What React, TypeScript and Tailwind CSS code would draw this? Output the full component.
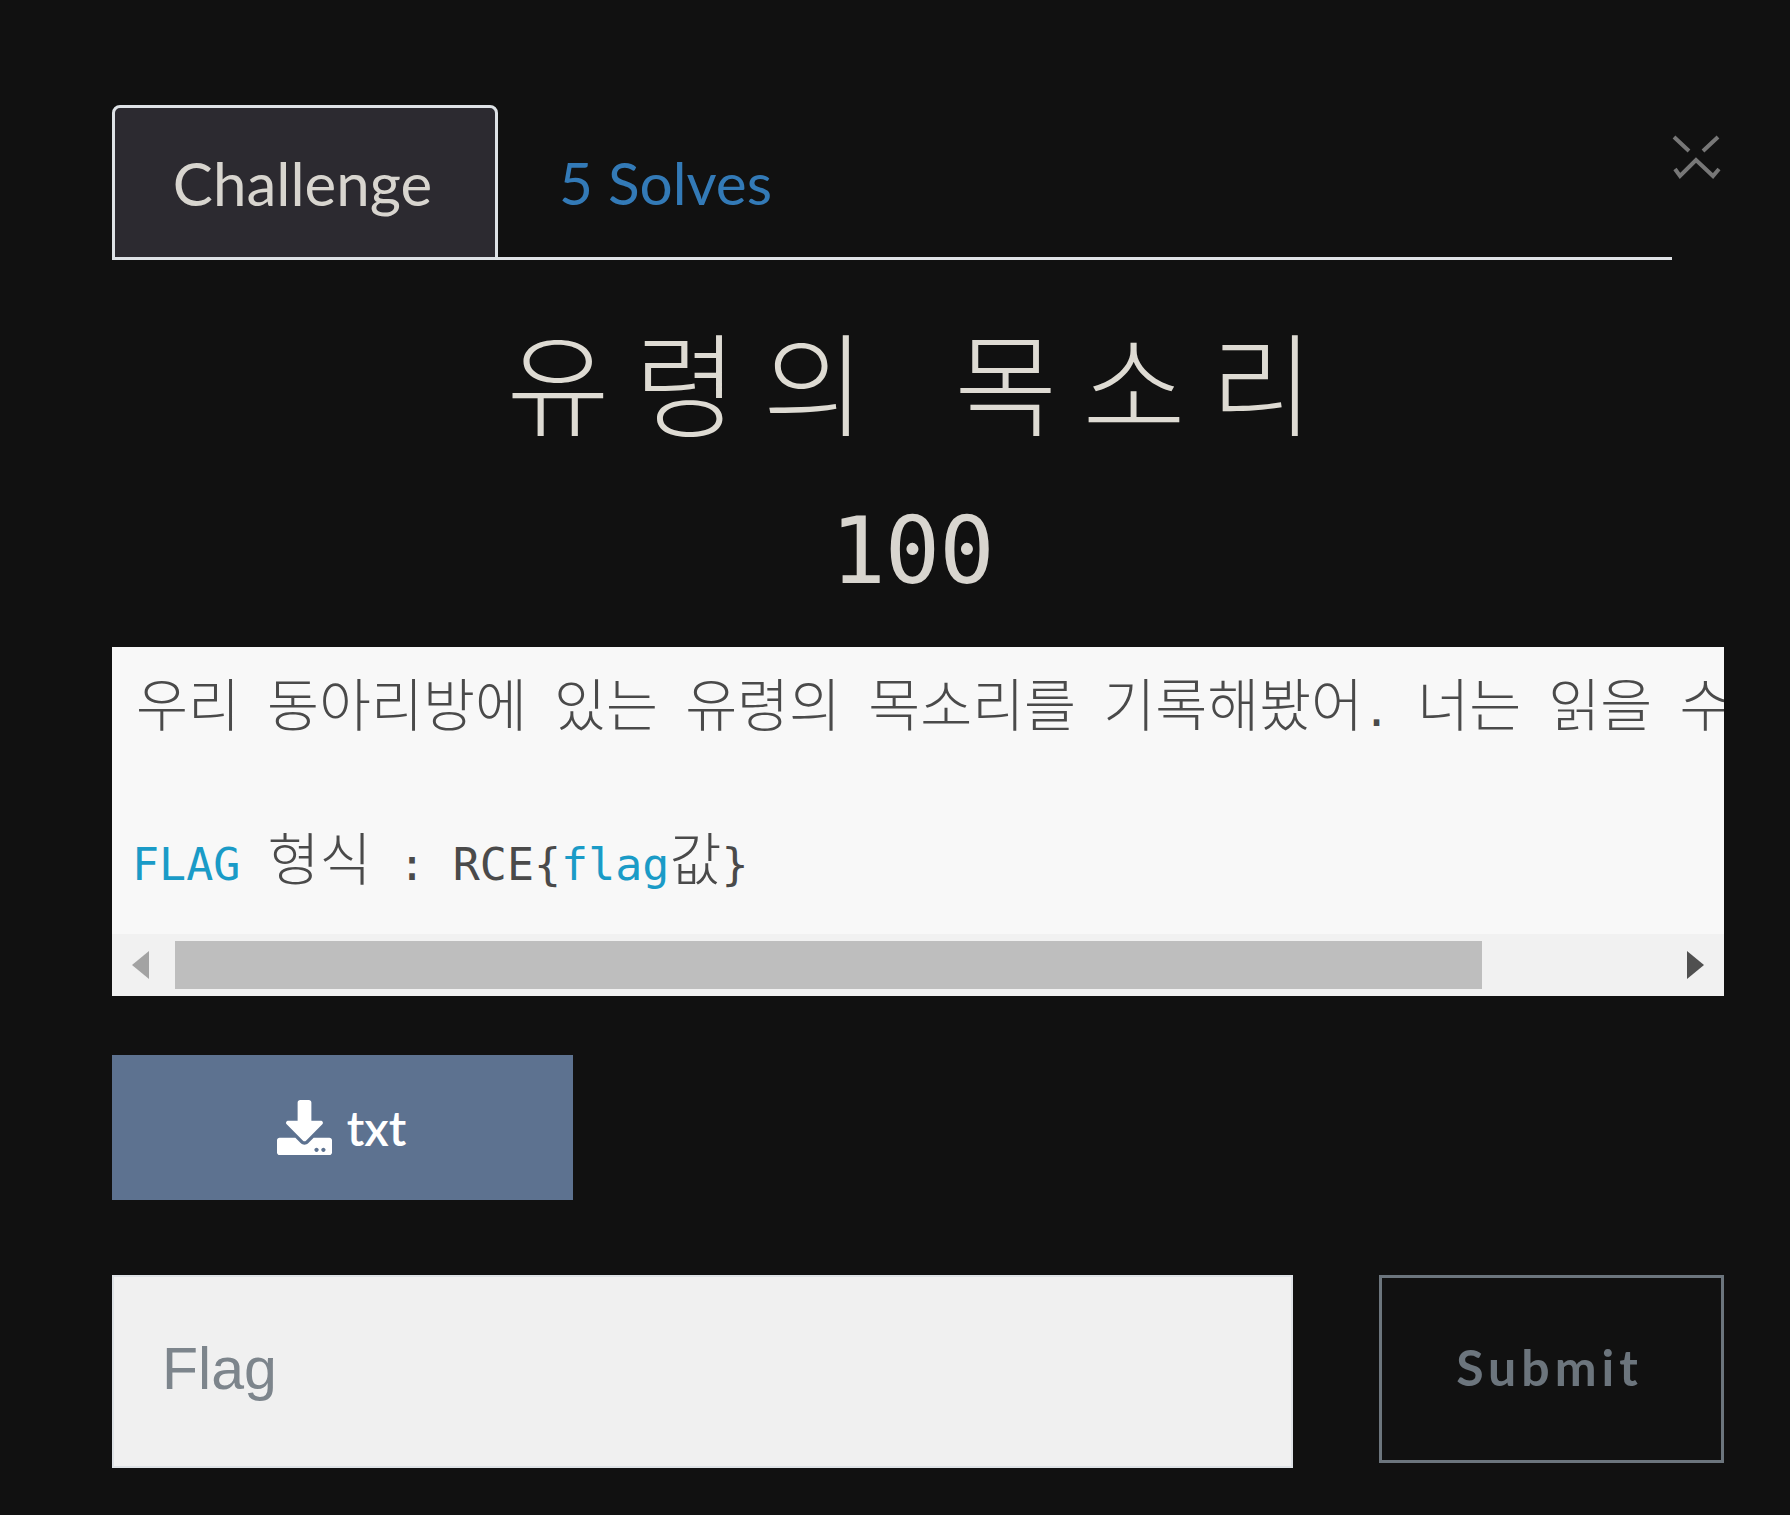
import { FaDownload } from "react-icons/fa";

const H = ({ children }: { children: string }) => (
  <span className="font-['Noto_Sans_CJK_KR',sans-serif] text-[56.5px] font-light">{children}</span>
);

export default function App() {
  return (
    <div className="min-h-[1515px] w-[1790px] bg-[#111111] pl-[112px] pt-[105px] font-['Lato',sans-serif]">
      <div className="w-[1612px]">
        <div className="flex items-start">
          <div className="flex h-[155px] w-[1560px] items-stretch border-b-[3px] border-[#dfe2e6]">
            <div className="-mb-[3px] flex w-[386px] items-center justify-center rounded-t-[8px] border-[3px] border-[#dee2e6] bg-[#2c2a30] pr-[5px] text-[60px] text-[#d8d5cf]">
              Challenge
            </div>
            <div className="flex items-center pl-[61px] pt-[4px] text-[58.5px] text-[#337ab7]">5 Solves</div>
          </div>
          <svg className="mt-[30px]" width="50" height="46" viewBox="0 0 50 46" fill="none" stroke="#777777" strokeWidth="4">
            <path d="M2 2L17 16M46 2L31 16M3 34L8 41L24 25L41 41L47 34" />
          </svg>
        </div>

        <h1 className="mt-[54px] pl-[9px] text-center font-['Noto_Sans_CJK_KR',sans-serif] text-[112px] font-light leading-[130px] tracking-[25px] text-[#dedbd3] [word-spacing:14px]">
          유령의 목소리
        </h1>
        <h2 className="mt-[58px] pr-[12px] text-center font-['DejaVu_Sans_Mono',monospace] text-[92px] font-normal leading-[100px] tracking-[-1px] text-[#d8d5cf]">
          100
        </h2>

        <div className="mt-[45px] h-[349px] overflow-hidden bg-[#f8f8f8]">
          <pre className="h-[287px] overflow-hidden whitespace-pre pl-[24px] pt-[18px] font-['DejaVu_Sans_Mono',monospace] text-[45px] leading-[72px] text-[#4a4a4a]">
            <H>우리</H> <H>동아리방에</H> <H>있는</H> <H>유령의</H> <H>목소리를</H> <H>기록해봤어</H>. <H>너는</H> <H>읽을</H> <H>수</H>
            {"\n\n"}
            <span className="-ml-[4px] text-[#1a9bc7]">FLAG</span> <H>형식</H> : RCE{"{"}
            <span className="text-[#1a9bc7]">flag</span>
            <H>값</H>
            {"}"}
          </pre>
          <div className="flex h-[62px] items-center bg-[#f1f1f1]">
            <svg className="ml-[20px]" width="18" height="28" viewBox="0 0 18 28" fill="#a3a3a3">
              <path d="M17 0V28L0 14Z" />
            </svg>
            <div className="ml-[25px] h-[48px] w-[1307px] bg-[#bebebe]" />
            <svg className="ml-[204px]" width="18" height="28" viewBox="0 0 18 28" fill="#505050">
              <path d="M1 0V28L18 14Z" />
            </svg>
          </div>
        </div>

        <button className="mt-[59px] flex h-[145px] w-[461px] items-center justify-center gap-[15px] bg-[#5d7290] pr-[2px] text-[48px] font-semibold text-white">
          <FaDownload size={55} />
          <span>txt</span>
        </button>

        <div className="mt-[75px] flex items-start justify-between">
          <input
            placeholder="Flag"
            className="h-[193px] w-[1181px] border-2 border-[#dee2e6] bg-[#f0f0f0] pb-[6px] pl-[48px] font-['Liberation_Sans',sans-serif] text-[59px] placeholder:text-[#7d858c]"
          />
          <button className="flex h-[188px] w-[345px] items-center justify-center border-[3px] border-[#6c757d] pb-[3px] pr-[4px] text-[50px] font-bold tracking-[5px] text-[#6c757d]">
            Submit
          </button>
        </div>
      </div>
    </div>
  );
}
